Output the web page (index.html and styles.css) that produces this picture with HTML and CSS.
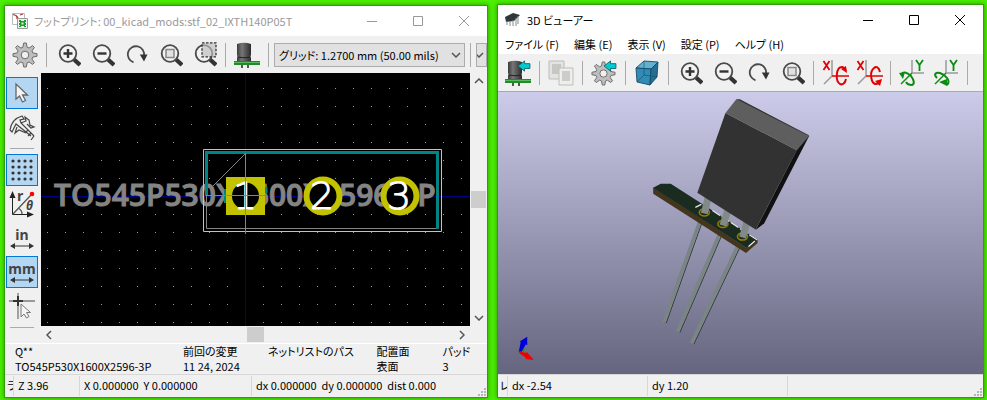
FILE: index.html
```html
<!DOCTYPE html>
<html lang="ja">
<head>
<meta charset="utf-8">
<title>フットプリント</title>
<link rel="stylesheet" href="styles.css">
</head>
<body>
<svg class="defs" aria-hidden="true">
  <defs>
    <linearGradient id="cap" x1="0" x2="1" y1="0" y2="0">
      <stop offset="0" stop-color="#3a3a3a"/><stop offset=".35" stop-color="#777"/><stop offset="1" stop-color="#2b2b2b"/>
    </linearGradient>
    <symbol id="gear" viewBox="0 0 26 26">
      <path d="M11.700 1h2.600l.8 4.200 2 .8 3.500-2.400 1.800 1.800-2.400 3.500.8 2 4.200.8v2.600l-4.200.8-.8 2 2.400 3.500-1.800 1.800-3.500-2.400-2 .8-.8 4.200h-2.600l-.8-4.200-2-.8-3.500 2.400-1.800-1.800L6 17.100l-.8-2L1 14.300v-2.600l4.200-.8.8-2-2.400-3.500 1.800-1.800L8.900 6l2-.8z" fill="#bdbdbd" stroke="#6c6c6c"/>
      <circle cx="13" cy="13" r="3.800" fill="#efefef" stroke="#6c6c6c"/>
    </symbol>
    <symbol id="lens" viewBox="0 0 26 26">
      <path d="M17 17.500l6 5.500" stroke="#333" stroke-width="4.200"/>
      <circle cx="11" cy="11.500" r="8.300" fill="#f2f2f2" stroke="#4a4a4a" stroke-width="1.800"/>
    </symbol>
    <symbol id="zoom-in" viewBox="-2 0 26 26"><use href="#lens" width="26" height="26"/><path d="M6.500 11.500h9M11 7v9" stroke="#333" stroke-width="2.400"/></symbol>
    <symbol id="zoom-out" viewBox="-2 0 26 26"><use href="#lens" width="26" height="26"/><path d="M6.500 11.500h9" stroke="#333" stroke-width="2.400"/></symbol>
    <symbol id="zoom-fit" viewBox="-2 0 26 26"><use href="#lens" width="26" height="26"/><rect x="7" y="7.500" width="8" height="8" fill="#e2e2e2" stroke="#888" stroke-width="1.500"/></symbol>
    <symbol id="zoom-area" viewBox="-2 0 26 26"><use href="#lens" width="26" height="26"/><rect x="9" y=".8" width="14" height="14" fill="#bbb" fill-opacity=".65" stroke="#333" stroke-width="1.300" stroke-dasharray="2.500 1.500"/></symbol>
    <symbol id="refresh" viewBox="-1 0 26 26"><path d="M9.500 20.300A8.200 8.200 0 1 1 20 14" fill="none" stroke="#4a4a4a" stroke-width="1.800"/><path d="M15.800 12.500h7.700L20 19.500z" fill="#333"/></symbol>
    <symbol id="chip3d" viewBox="0 0 28 28">
      <path d="M9 23v4M15 23v4" stroke="#222" stroke-width="1.500"/>
      <path d="M4 3q7-2.500 14 0v11l-1 2 1 1v3q-7 2-14 0v-3l1-1-1-2z" fill="url(#cap)"/>
      <path d="M4 16q7 1.500 14 0" stroke="#222" fill="none"/>
      <path d="M1 20h26v4H1z" fill="#238a2b"/><path d="M1 21.500h26" stroke="#56b95c"/>
    </symbol>
    <symbol id="arrow" viewBox="0 0 13 11"><path d="M1 5.500L7 .8v2.500h5v4.500H7v2.500z" fill="#00cbd3" stroke="#146063" stroke-width=".8"/></symbol>
    <symbol id="chip-load" viewBox="0 0 28 28"><use href="#chip3d" width="28" height="28"/><use href="#arrow" x="13" y="1" width="14" height="12"/></symbol>
    <symbol id="gear-load" viewBox="0 0 28 28"><use href="#gear" x="1" y="2" width="25" height="25"/><use href="#arrow" x="13" y="1" width="14" height="12"/></symbol>
    <symbol id="copy" viewBox="0 0 28 28">
      <path d="M2 2h15v18H2z" fill="#e3e3e0" stroke="#bdbdb8"/><path d="M5 6h9M5 8h9M5 10h9M5 12h9M5 14h7" stroke="#aaa"/>
      <path d="M12 9h14v17H12z" fill="#eeeeec" stroke="#bdbdb8"/><path d="M15 13h8M15 15h8M15 17h8M15 19h8M15 21h8" stroke="#aaa"/>
    </symbol>
    <symbol id="cube" viewBox="0 0 28 28" stroke="#154b65" stroke-width=".9" stroke-linejoin="round">
      <path d="M3 9l8-7 14 1-7 7z" fill="#62b1d2"/><path d="M3 9l15 1-1 16-13-3z" fill="#2f8cb7"/><path d="M18 10l7-7-1 15-7 8z" fill="#236f94"/>
      <path d="M11 2v14l13 2M11 16l-7 7" fill="none" stroke-width=".6"/>
    </symbol>
    <symbol id="rot-x" viewBox="0 0 28 28" fill="none">
      <path d="M11 1v16L3 25" stroke="#999" stroke-width="1.500"/>
      <path d="M2.500 2l6 9M8.500 2l-6 9" stroke="#e40000" stroke-width="1.800"/>
      <path d="M11 17h17" stroke="#e40000" stroke-width="1.500"/>
    </symbol>
    <symbol id="rot-x1" viewBox="0 0 28 28" fill="none"><use href="#rot-x" width="28" height="28"/><path d="M25 20c-1 5-4 6-6 5-5-3-4-17 2-17 2 0 3 2 4 4" stroke="#e40000" stroke-width="2"/><path d="M20 10l5-3 1 7z" fill="#e40000"/></symbol>
    <symbol id="rot-x2" viewBox="0 0 28 28" fill="none"><use href="#rot-x" width="28" height="28"/><path d="M25 13c-1-5-4-6-6-4-5 4-3 16 2 16 2 0 3-1 4-3" stroke="#e40000" stroke-width="2"/><path d="M20 22l7-2-2 7z" fill="#e40000"/></symbol>
    <symbol id="rot-y" viewBox="0 0 28 28" fill="none">
      <path d="M14 1v13h12" stroke="#999" stroke-width="1.500"/>
      <path d="M18 1l3.500 5L25 1M21.500 6v6" stroke="#0c8a12" stroke-width="1.800"/>
      <path d="M14 14L3 25" stroke="#0c8a12" stroke-width="1.500"/>
    </symbol>
    <symbol id="rot-y1" viewBox="0 0 28 28" fill="none"><use href="#rot-y" width="28" height="28"/><path d="M4 16c0-4 5-3 9 1 3 4 4 8 1 9-2 0-5-1-6-3" stroke="#0c8a12" stroke-width="2"/><path d="M1 14l6-1-2 7z" fill="#0c8a12"/></symbol>
    <symbol id="rot-y2" viewBox="0 0 28 28" fill="none"><use href="#rot-y" width="28" height="28"/><path d="M5 19c-4-4-1-6 3-5 6 2 11 8 7 12" stroke="#0c8a12" stroke-width="2"/><path d="M7 23l8-3v7z" fill="#0c8a12"/></symbol>
    <symbol id="ctl-min" viewBox="0 0 12 12"><path d="M1 6.500h10" stroke="currentColor"/></symbol>
    <symbol id="ctl-max" viewBox="0 0 12 12"><path d="M1.500 1.500h9v9h-9z" stroke="currentColor" fill="none"/></symbol>
    <symbol id="ctl-close" viewBox="0 0 12 12"><path d="M1 1l10 10M11 1L1 11" stroke="currentColor"/></symbol>
    <symbol id="grip" viewBox="0 0 9 9" fill="#b5b5b5"><path d="M6 0h2v2H6zM3 3h2v2H3zM6 3h2v2H6zM0 6h2v2H0zM3 6h2v2H3zM6 6h2v2H6z"/></symbol>
    <symbol id="span" viewBox="0 0 24 6"><path d="M2 3h20" stroke="#333"/><path d="M0 3l5-3v6zM24 3l-5-3v6z" fill="#333"/></symbol>
    <pattern id="dots" x="47" y="88" width="18" height="18" patternUnits="userSpaceOnUse"><rect width="1" height="1" fill="#999"/></pattern>
  </defs>
</svg>

<main class="desktop">
  <section class="window inactive">
    <header class="titlebar">
      <svg class="app" viewBox="0 0 18 18"><path d="M1.500 1.500h12v11h-12z" fill="#fff" stroke="#bbb"/><path d="M2 2.500l3 1 2 2.500M9 3l3-1M6 4v3" stroke="#a33" fill="none" stroke-width="1.300"/><path d="M6.500 6.500h10v10h-10z" fill="#eee" stroke="#999"/><path d="M8 8h2v1h3V8h2v2h-1v1h1v2h-1v1h1v1h-2v-1h-3v1H8v-1h1v-1H8v-2h1v-1H8z" fill="#1a9d2b"/><path d="M10.500 10.500h2v2h-2z" fill="#eee"/></svg>
      <h1>フットプリント: 00_kicad_mods:stf_02_IXTH140P05T</h1>
      <div class="controls">
        <button aria-label="最小化"><svg><use href="#ctl-min"/></svg></button>
        <button aria-label="最大化"><svg><use href="#ctl-max"/></svg></button>
        <button aria-label="閉じる"><svg><use href="#ctl-close"/></svg></button>
      </div>
    </header>
    <div class="toolbar">
      <button aria-label="設定"><svg><use href="#gear"/></svg></button>
      <span class="sep"></span>
      <button aria-label="ズームイン"><svg><use href="#zoom-in"/></svg></button>
      <button aria-label="ズームアウト"><svg><use href="#zoom-out"/></svg></button>
      <button aria-label="再描画"><svg><use href="#refresh"/></svg></button>
      <button aria-label="全体表示"><svg><use href="#zoom-fit"/></svg></button>
      <button aria-label="選択範囲を拡大"><svg><use href="#zoom-area"/></svg></button>
      <span class="sep"></span>
      <button class="large" aria-label="3D"><svg><use href="#chip3d"/></svg></button>
      <span class="sep"></span>
      <div class="combo"><select aria-label="グリッド"><option>グリッド: 1.2700 mm (50.00 mils)</option></select><svg viewBox="0 0 10 6"><path d="M1 1l4 4 4-4"/></svg></div>
      <span class="sep"></span>
      <div class="combo cut"><select aria-label="ズーム"><option></option></select><svg viewBox="3 0 7 6"><path d="M1 1l4 4 4-4"/></svg></div>
    </div>
    <div class="workspace">
      <div class="toolstrip">
        <button class="on" aria-label="選択"><svg viewBox="0 0 28 28"><path d="M8 5v15l3.500-3 3 6 3-1.500-3-5.500h5z" fill="#f5f5f5" stroke="#666" stroke-width="1.300"/></svg></button>
        <button aria-label="測定"><svg viewBox="0 0 28 28"><path d="M2 17C3 10 7 5 14 3l2 3-4 1 1 3 13 13M2 17l2 2 4-8 15 12M13 10l5-2-1-4 4 3 1 5 4 2-3 1-4-4M9 14l-2 6 4-3 7 3M20 17l-3 3M23 20l-3 3M26 23l-3 4" fill="none" stroke="#444" stroke-width="1.200"/></svg></button>
        <span class="rule"></span>
        <button class="on" aria-label="グリッド表示"><svg viewBox="0 0 28 28"><path d="M5 5h19M5 11h19M5 17h19M5 23h19" stroke="#333" stroke-width="3.200" stroke-linecap="round" stroke-dasharray="0 6"/></svg></button>
        <button aria-label="極座標"><svg viewBox="0 0 28 28"><path d="M4.500 4v20.500H22" stroke="#222" fill="none"/><path d="M1.500 8l3-7 3 7zM19 21.500l7 3-7 3z" fill="#222"/><path d="M5 24L23 5M10 18q4 2 4 6" stroke="#555" stroke-width="1.300" fill="none"/><circle cx="24" cy="4" r="2.300" fill="#f00"/><text x="9" y="11" class="glyph">r</text><text x="18" y="20" class="glyph theta">θ</text></svg></button>
        <button class="unit">in<svg><use href="#span"/></svg></button>
        <button class="unit on">mm<svg><use href="#span"/></svg></button>
        <button aria-label="カーソル"><svg viewBox="0 0 28 28"><path d="M10 1v26M1 9h26" stroke="#999" stroke-width="1.800"/><path d="M10 4v10M5 9h10" stroke="#333" stroke-width="2"/><path d="M13 12v13l3-3 2.500 4 2.500-1.500-2.500-4h4z" fill="#f5f5f5" stroke="#777"/></svg></button>
        <span class="rule"></span>
      </div>
      <div class="board">
        <svg viewBox="41 73 429 253" preserveAspectRatio="xMidYMid slice">
          <rect x="41" y="73" width="429" height="253" fill="#000"/>
          <rect x="41" y="73" width="429" height="253" fill="url(#dots)"/>
          <path d="M41 196.500h429M245.500 73v253" stroke="#000084"/>
          <text x="54" y="206" class="value">TO545P530X1600X2596-3P</text>
          <path d="M225.500 189v14M266 187v6" stroke="#008484" stroke-width="3"/>
          <path d="M203.500 149.500h238v82h-238z" fill="none" stroke="#c2c2c2"/>
          <path d="M206.500 153v75.500h231M245.500 153.500L212 187" fill="none" stroke="#848484"/>
          <path d="M206.500 196v-43.500h231V229" fill="none" stroke="#008484" stroke-width="3"/>
          <path d="M226 177h39v38h-39z" fill="#c2c200"/>
          <circle cx="245.500" cy="196" r="13.500"/>
          <circle cx="323" cy="196" r="16.500" stroke="#c2c200" stroke-width="6"/>
          <circle cx="400" cy="196" r="16.500" stroke="#c2c200" stroke-width="6"/>
          <text x="245" y="209" class="pad">1</text><text x="322" y="209" class="pad">2</text><text x="399" y="209" class="pad">3</text>
          <path d="M206 195.500h59M245.500 153v81" stroke="#848484"/>
        </svg>
      </div>
      <div class="scroll vertical"><svg viewBox="0 0 10 6"><path d="M1 5l4-4 4 4"/></svg><span></span><svg viewBox="0 0 10 6"><path d="M1 1l4 4 4-4"/></svg></div>
      <div class="scroll horizontal"><svg viewBox="0 0 6 10"><path d="M5 1L1 5l4 4"/></svg><span></span><svg viewBox="0 0 6 10"><path d="M1 1l4 4-4 4"/></svg></div>
    </div>
    <table class="info">
      <tr><th>Q**</th><th>前回の変更</th><th>ネットリストのパス</th><th>配置面</th><th>パッド</th></tr>
      <tr><td>TO545P530X1600X2596-3P</td><td>11 24, 2024</td><td></td><td>表面</td><td>3</td></tr>
    </table>
    <footer class="status left">
      <span class="clip">ラ</span><span>Z 3.96</span><span>X 0.000000&nbsp; Y 0.000000</span><span>dx 0.000000&nbsp; dy 0.000000&nbsp; dist 0.000</span>
      <svg class="grip"><use href="#grip"/></svg>
    </footer>
  </section>

  <section class="window">
    <header class="titlebar">
      <svg class="app" viewBox="0 0 18 18"><path d="M1 6l8-4 7 2-6 6-8 1z" fill="#30373a"/><path d="M3 10v4M6 10v5M9 9v6M12 7v8M14 5v8" stroke="#888"/></svg>
      <h1>3D ビューアー</h1>
      <div class="controls">
        <button aria-label="最小化"><svg><use href="#ctl-min"/></svg></button>
        <button aria-label="最大化"><svg><use href="#ctl-max"/></svg></button>
        <button aria-label="閉じる"><svg><use href="#ctl-close"/></svg></button>
      </div>
    </header>
    <nav class="menu"><button>ファイル (F)</button><button>編集 (E)</button><button>表示 (V)</button><button>設定 (P)</button><button>ヘルプ (H)</button></nav>
    <div class="toolbar">
      <button class="large" aria-label="ボードを再読込"><svg><use href="#chip-load"/></svg></button>
      <span class="sep"></span>
      <button class="large" aria-label="コピー"><svg><use href="#copy"/></svg></button>
      <span class="sep"></span>
      <button class="large" aria-label="レンダリング"><svg><use href="#gear-load"/></svg></button>
      <span class="sep"></span>
      <button class="large" aria-label="平行投影"><svg><use href="#cube"/></svg></button>
      <span class="sep"></span>
      <button aria-label="ズームイン"><svg><use href="#zoom-in"/></svg></button>
      <button aria-label="ズームアウト"><svg><use href="#zoom-out"/></svg></button>
      <button aria-label="再描画"><svg><use href="#refresh"/></svg></button>
      <button aria-label="全体表示"><svg><use href="#zoom-fit"/></svg></button>
      <span class="sep"></span>
      <button class="large" aria-label="X 時計回り"><svg><use href="#rot-x1"/></svg></button>
      <button class="large" aria-label="X 反時計回り"><svg><use href="#rot-x2"/></svg></button>
      <span class="sep"></span>
      <button class="large" aria-label="Y 時計回り"><svg><use href="#rot-y1"/></svg></button>
      <button class="large" aria-label="Y 反時計回り"><svg><use href="#rot-y2"/></svg></button>
      <span class="sep"></span>
    </div>
    <div class="scene">
      <svg viewBox="498 92 484 281" preserveAspectRatio="xMidYMid slice">
        <g stroke="#222b2b" stroke-width="4"><path d="M700 222L664.500 321.500M719.500 235L678 331M738 246L692 342.500"/></g>
        <g stroke="#7c8585" stroke-width="4"><path d="M699.300 222L663.800 321.500M718.800 235L677.300 331M737.300 246L691.300 342.500"/></g>
        <path d="M653 187L746 247.500 757 239v3.500l-11.500 10L653 193.500z" fill="#44351d"/>
        <path d="M653 187.500l7.500-4h10L757 239l-11 8.500z" fill="#1a2c20"/>
        <path d="M695 207l6-3M712 210l44 29-8 7" fill="none" stroke="#e8e8e8" stroke-width="1.200" stroke-dasharray="9 2"/>
        <g fill="none" stroke="#967b05" stroke-width="1.600"><ellipse cx="704" cy="212" rx="5" ry="3.500"/><ellipse cx="722.500" cy="223.500" rx="5" ry="3.500"/><ellipse cx="742" cy="236" rx="5" ry="3.500"/></g>
        <path d="M708 196l-4 17M728 208l-5.500 17M747 220l-5 17" stroke="#818989" stroke-width="7"/>
        <path d="M725 113l71 37-41 79-58-36.500z" fill="#323232"/>
        <path d="M736 99l4 .5L808.500 136 796 150l-71-37z" fill="#5e5e5e"/>
        <path d="M796 150l12.500-14.500L763.500 223l-8.500 6.500z" fill="#111"/>
        <path d="M738 99.500l70 36" stroke="#333"/>
        <path d="M522 348l-1.500 4 4 1v-6z" fill="#0a0"/>
        <path d="M519 351l2-10 -1-.5 7.500-4.500v8l-1.500-.5-4 7z" fill="#00d"/>
        <path d="M519 350l7 2 1-1 7 8-8-1v-1.500l-6-4z" fill="#e00"/>
      </svg>
    </div>
    <footer class="status right">
      <span class="clip">レ</span><span>dx -2.54</span><span>dy 1.20</span><span></span>
      <svg class="grip"><use href="#grip"/></svg>
    </footer>
  </section>
</main>
</body>
</html>
```

FILE: styles.css
```css
* { box-sizing: border-box; }

body {
  margin: 0;
  background: #4df000;
  color: #000;
  font: 11px/14px "Noto Sans CJK JP", sans-serif;
  font-feature-settings: "palt";
}

.defs { position: absolute; width: 0; height: 0; }

button {
  padding: 0;
  border: 0;
  background: none;
  color: inherit;
  font: inherit;
  font-feature-settings: inherit;
}

.desktop {
  display: grid;
  grid-template-columns: 484fr 487fr;
  gap: 9px;
  height: 100vh;
  padding: 4px 3px 3px 4px;
}

.window {
  display: flex;
  flex-direction: column;
  min-width: 0;
  border: 1px solid #2f9e0a;
  background: #f0f0f0;
  box-shadow: 0 0 5px #2a9200;
}

.inactive { margin-top: 1px; }

.titlebar {
  display: flex;
  align-items: center;
  flex: none;
  height: 30px;
  padding-left: 6px;
  background: #fff;
}

.titlebar h1 {
  flex: 1;
  margin: 0 0 0 5px;
  font-size: 11px;
  font-weight: 400;
  white-space: nowrap;
}

.inactive .titlebar { color: #999; }
.app { width: 18px; height: 18px; }
.controls { display: flex; }
.controls button { display: grid; place-items: center; width: 46px; height: 28px; }
.controls svg { width: 12px; height: 12px; }

.menu {
  display: flex;
  flex: none;
  gap: 15px;
  height: 19px;
  padding: 0 0 2px 7px;
  background: #fff;
}

.menu button { white-space: nowrap; }

.toolbar {
  display: flex;
  align-items: center;
  flex: none;
  height: 37px;
  padding-left: 3px;
  overflow: hidden;
}

.toolbar button {
  display: grid;
  flex: none;
  place-items: center;
  width: 34px;
  height: 34px;
}

.toolbar button svg { width: 26px; height: 26px; }
.toolbar .large svg { width: 28px; height: 28px; }
.sep { flex: none; width: 1px; height: 24px; margin: 0 4px; background: #aaa; }

.combo { display: grid; flex: 1; align-items: center; min-width: 0; margin: 0 1px; }
.combo select, .combo svg { grid-area: 1 / 1; }
.combo select {
  width: 100%;
  height: 24px;
  padding: 0 4px;
  border: 1px solid #acacac;
  border-radius: 0;
  background: #e1e1e1;
  color: #000;
  font: inherit;
  font-feature-settings: inherit;
  appearance: none;
}
.combo svg { z-index: 1; justify-self: end; width: 10px; height: 6px; margin-right: 4px; pointer-events: none; }
.combo path, .scroll path { fill: none; stroke: #555; stroke-width: 1.500; }
.cut { flex: none; width: 11px; margin-right: 0; }
.cut select { padding: 0; }
.cut svg { width: 7px; margin-right: 3px; }

.workspace {
  display: grid;
  grid-template: minmax(0, 1fr) 17px / 36px minmax(0, 1fr) 17px;
  flex: 1;
  min-height: 0;
}

.toolstrip {
  display: flex;
  flex-direction: column;
  grid-row: 1 / 3;
  gap: 2px;
  padding: 4px 0 0 1px;
}

.toolstrip button {
  display: grid;
  flex: none;
  place-items: center;
  width: 32px;
  height: 32px;
  border: 1px solid transparent;
}

.toolstrip .on { border-color: #0078d7; background: #b3d7f3; }
.toolstrip svg { width: 28px; height: 28px; }
.toolstrip .unit { align-content: center; font: 700 14px/16px "Noto Sans", sans-serif; color: #444; }
.toolstrip .unit svg { width: 24px; height: 6px; }
.rule { flex: none; width: 24px; height: 1px; margin: 3px 4px; background: #aaa; }
.glyph { font: 700 14px "Open Sans", sans-serif; fill: #444; }
.theta { font-size: 12px; font-style: italic; }

.board { min-width: 0; min-height: 0; background: #000; }
.board svg, .scene svg { display: block; width: 100%; height: 100%; }
.value { font: 600 30px "Open Sans", sans-serif; fill: #848484; stroke: #848484; stroke-width: 1; }
.pad { font: 200 38px "DejaVu Sans", sans-serif; fill: #fff; stroke: #fff; stroke-width: 1; text-anchor: middle; }

.scroll { display: flex; align-items: center; justify-content: space-between; }
.scroll span { background: #cdcdcd; }
.vertical { flex-direction: column; padding: 5px 0; }
.vertical svg { width: 10px; height: 6px; }
.vertical span { width: 15px; height: 17px; }
.horizontal { grid-column: 2; padding: 0 5px; }
.horizontal svg { width: 6px; height: 10px; }
.horizontal span { width: 17px; height: 15px; }

.info {
  flex: none;
  width: 100%;
  height: 31px;
  padding: 0 0 1px 10px;
  border-top: 1px solid #fff;
  border-spacing: 0;
  table-layout: fixed;
}
.info th, .info td { height: 14px; padding: 0; font-weight: 400; text-align: left; white-space: nowrap; }
.info th:nth-child(1) { width: 168px; }
.info th:nth-child(2) { width: 18%; }
.info th:nth-child(3) { width: 23%; }
.info th:nth-child(4) { width: 14%; }

.status {
  display: grid;
  flex: none;
  align-items: center;
  height: 23px;
  border-top: 1px solid #d7d7d7;
}
.left { grid-template-columns: 8px 66px 172px 1fr 9px; }
.right { grid-template-columns: 9px 140px 140px 1fr 9px; }
.status span { height: 20px; padding-left: 4px; border-left: 1px solid #d7d7d7; line-height: 18px; white-space: nowrap; }
.status .clip { padding-left: 2px; border-left: 0; overflow: hidden; }
.status .grip { align-self: end; width: 9px; height: 9px; }

.scene {
  flex: 1;
  min-height: 0;
  border-top: 1px solid #aaa;
  background: linear-gradient(#ccccea, #65657f);
}
```
